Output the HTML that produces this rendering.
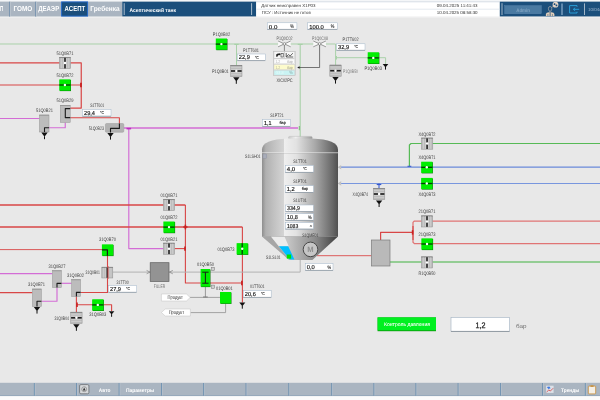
<!DOCTYPE html>
<html><head><meta charset="utf-8"><title>SCADA</title>
<style>html,body{margin:0;padding:0;background:#e8e8e8;}body{width:600px;height:400px;overflow:hidden;font-family:"Liberation Sans", sans-serif;}svg{display:block;will-change:transform;font-family:"Liberation Sans", sans-serif;}</style>
</head><body>
<svg width="600" height="400" viewBox="0 0 600 400" text-rendering="geometricPrecision">
<defs>
<linearGradient id="tg" x1="0" y1="0" x2="1" y2="0"><stop offset="0" stop-color="#8e8e8e"/><stop offset="0.05" stop-color="#b0b0b0"/><stop offset="0.16" stop-color="#c2c2c2"/><stop offset="0.285" stop-color="#d4d4d4"/><stop offset="0.29" stop-color="#efefef"/><stop offset="0.45" stop-color="#e2e2e2"/><stop offset="0.7" stop-color="#a8a8a8"/><stop offset="0.92" stop-color="#6a6a6a"/><stop offset="1" stop-color="#505050"/></linearGradient>
<linearGradient id="cg" x1="0" y1="0" x2="1" y2="0"><stop offset="0" stop-color="#d6d6d6"/><stop offset="0.35" stop-color="#c4c4c4"/><stop offset="0.7" stop-color="#8a8a8a"/><stop offset="1" stop-color="#3c3c3c"/></linearGradient>
<linearGradient id="ng" x1="0" y1="0" x2="1" y2="0"><stop offset="0" stop-color="#c8c8c8"/><stop offset="0.3" stop-color="#f0f0f0"/><stop offset="1" stop-color="#9a9a9a"/></linearGradient>
</defs>
<rect x="0" y="0" width="600" height="400" fill="#e8e8e8"/>
<path d="M0.00,44.00 L335.60,44.00" fill="none" stroke="#a9d1a9" stroke-width="1.00" stroke-linejoin="round" />
<path d="M236.50,44.00 L236.50,65.50" fill="none" stroke="#a9d1a9" stroke-width="1.00" stroke-linejoin="round" />
<line x1="234.30" y1="44.40" x2="238.70" y2="44.40" stroke="#a9d1a9" stroke-width="1.20"/>
<path d="M300.20,44.00 L300.20,137.00" fill="none" stroke="#a9d1a9" stroke-width="1.10" stroke-linejoin="round" />
<line x1="297.70" y1="44.40" x2="302.70" y2="44.40" stroke="#a9d1a9" stroke-width="1.20"/>
<path d="M335.60,44.00 L335.60,65.20" fill="none" stroke="#a9d1a9" stroke-width="1.00" stroke-linejoin="round" />
<path d="M335.60,57.70 L385.60,57.70 L385.60,64.00" fill="none" stroke="#a9d1a9" stroke-width="1.00" stroke-linejoin="round" />
<line x1="336.40" y1="56.00" x2="336.40" y2="59.40" stroke="#a9d1a9" stroke-width="1.20"/>
<path d="M0.00,62.90 L81.25,62.90 L81.25,108.10 L70.00,108.10" fill="none" stroke="#d84646" stroke-width="1.20" stroke-linejoin="round" />
<path d="M0.00,85.00 L81.25,85.00" fill="none" stroke="#d84646" stroke-width="1.20" stroke-linejoin="round" />
<line x1="81.00" y1="82.70" x2="81.00" y2="87.30" stroke="#c82020" stroke-width="1.80"/>
<path d="M70.00,117.75 L119.40,117.75 L119.40,124.00" fill="none" stroke="#d84646" stroke-width="1.10" stroke-linejoin="round" />
<path d="M0.00,118.45 L39.40,118.45" fill="none" stroke="#d36cd5" stroke-width="1.10" stroke-linejoin="round" />
<path d="M65.25,122.50 L65.25,127.75 L49.00,127.75" fill="none" stroke="#d36cd5" stroke-width="1.15" stroke-linejoin="round" />
<path d="M123.70,128.10 L298.00,128.10" fill="none" stroke="#d36cd5" stroke-width="1.50" stroke-linejoin="round" />
<path d="M128.80,128.10 L128.80,248.60 L163.40,248.60" fill="none" stroke="#d36cd5" stroke-width="1.15" stroke-linejoin="round" />
<line x1="126.50" y1="128.60" x2="131.10" y2="128.60" stroke="#c030c0" stroke-width="1.60"/>
<line x1="299.30" y1="126.00" x2="299.30" y2="130.20" stroke="#6fb86f" stroke-width="1.00"/>
<path d="M0.00,205.00 L185.40,205.00" fill="none" stroke="#d84646" stroke-width="1.40" stroke-linejoin="round" />
<path d="M185.40,205.00 L185.40,283.00 L242.40,283.00" fill="none" stroke="#d84646" stroke-width="1.10" stroke-linejoin="round" />
<path d="M0.00,227.00 L242.40,227.00" fill="none" stroke="#d84646" stroke-width="1.40" stroke-linejoin="round" />
<path d="M242.40,227.00 L242.40,302.60" fill="none" stroke="#d84646" stroke-width="1.10" stroke-linejoin="round" />
<line x1="185.40" y1="224.70" x2="185.40" y2="229.30" stroke="#c82020" stroke-width="1.60"/>
<line x1="183.30" y1="227.00" x2="187.50" y2="227.00" stroke="#c82020" stroke-width="1.40"/>
<path d="M174.60,248.60 L185.40,248.60" fill="none" stroke="#d84646" stroke-width="1.10" stroke-linejoin="round" />
<line x1="185.00" y1="246.40" x2="185.00" y2="250.80" stroke="#c82020" stroke-width="1.60"/>
<line x1="241.90" y1="280.80" x2="241.90" y2="285.20" stroke="#c82020" stroke-width="1.60"/>
<path d="M0.00,249.60 L102.50,249.60" fill="none" stroke="#d84646" stroke-width="0.90" stroke-linejoin="round" />
<path d="M107.50,255.00 L107.50,292.50 L80.60,292.50" fill="none" stroke="#d84646" stroke-width="1.10" stroke-linejoin="round" />
<path d="M0.00,292.60 L32.40,292.60" fill="none" stroke="#d84646" stroke-width="1.10" stroke-linejoin="round" />
<path d="M76.40,296.60 L76.40,312.00" fill="none" stroke="#d84646" stroke-width="1.10" stroke-linejoin="round" />
<path d="M76.40,304.70 L111.60,304.70 L111.60,311.00" fill="none" stroke="#d84646" stroke-width="1.10" stroke-linejoin="round" />
<line x1="77.00" y1="302.50" x2="77.00" y2="306.90" stroke="#c82020" stroke-width="1.60"/>
<path d="M0.00,273.60 L52.40,273.60" fill="none" stroke="#d36cd5" stroke-width="1.15" stroke-linejoin="round" />
<path d="M61.40,283.30 L71.60,283.30" fill="none" stroke="#d36cd5" stroke-width="1.15" stroke-linejoin="round" />
<path d="M57.00,287.60 L57.00,301.20 L41.40,301.20" fill="none" stroke="#d36cd5" stroke-width="1.15" stroke-linejoin="round" />
<path d="M113.00,272.10 L300.20,272.10 L300.20,259.80" fill="none" stroke="#b2b2b2" stroke-width="1.00" stroke-linejoin="round" />
<path d="M146.6,270.4 L150,272.1 L146.6,273.8" fill="none" stroke="#8a8a8a" stroke-width="0.8"/>
<path d="M172.8,270.4 L169.4,272.1 L172.8,273.8" fill="none" stroke="#8a8a8a" stroke-width="0.8"/>
<path d="M205.40,286.60 L205.40,297.40" fill="none" stroke="#8e8e8e" stroke-width="0.90" stroke-linejoin="round" />
<path d="M190.00,297.40 L220.00,297.40" fill="none" stroke="#9a9a9a" stroke-width="0.90" stroke-linejoin="round" />
<line x1="203.10" y1="297.00" x2="207.70" y2="297.00" stroke="#7a7a7a" stroke-width="1.00"/>
<path d="M225.60,303.60 L225.60,312.60 L190.40,312.60" fill="none" stroke="#9a9a9a" stroke-width="0.90" stroke-linejoin="round" />
<path d="M340.00,167.20 L600.00,167.20" fill="none" stroke="#6a8ada" stroke-width="1.30" stroke-linejoin="round" />
<path d="M340.00,183.40 L600.00,183.40" fill="none" stroke="#7896de" stroke-width="1.05" stroke-linejoin="round" />
<path d="M341.2,165.4 L338.2,167.2 L341.2,169" fill="#c4c4c4" stroke="#a4a4a4" stroke-width="0.4"/>
<path d="M341.2,181.6 L338.2,183.4 L341.2,185.2" fill="#c4c4c4" stroke="#a4a4a4" stroke-width="0.4"/>
<path d="M409.40,166.40 L409.40,145.00 L411.00,143.50 L600.00,143.50" fill="none" stroke="#56ba56" stroke-width="1.20" stroke-linejoin="round" />
<line x1="407.50" y1="166.30" x2="411.30" y2="166.30" stroke="#3858cc" stroke-width="1.10"/>
<path d="M379.00,183.40 L379.00,188.40" fill="none" stroke="#4a6ad2" stroke-width="1.20" stroke-linejoin="round" />
<line x1="376.70" y1="184.50" x2="381.30" y2="184.50" stroke="#3858cc" stroke-width="1.20"/>
<path d="M317.00,255.70 L371.40,255.70" fill="none" stroke="#dc5a5a" stroke-width="1.00" stroke-linejoin="round" />
<path d="M380.60,240.00 L380.60,232.40 L413.00,232.40" fill="none" stroke="#d84646" stroke-width="1.20" stroke-linejoin="round" />
<path d="M600.00,221.00 L414.40,221.00 L413.00,222.40 L413.00,242.20 L414.40,243.60 L600.00,243.60" fill="none" stroke="#e07474" stroke-width="1.25" stroke-linejoin="round" />
<path d="M413.00,226.00 L413.00,240.00" fill="none" stroke="#d84646" stroke-width="1.10" stroke-linejoin="round" />
<line x1="412.60" y1="230.20" x2="412.60" y2="234.60" stroke="#c82020" stroke-width="1.60"/>
<path d="M390.00,262.00 L600.00,262.00" fill="none" stroke="#78c478" stroke-width="1.30" stroke-linejoin="round" />
<rect x="288.6" y="136.4" width="23.6" height="3" rx="1" fill="url(#ng)" stroke="#b4b4b4" stroke-width="0.4"/>
<path d="M262,236.7 L262,149.5 C262,142.6 271,139.1 288,138.4 L312,138.4 C329,139.1 338,142.6 338,149.5 L338,236.7 Z" fill="url(#tg)"/>
<line x1="262" y1="152.7" x2="338" y2="152.7" stroke="#f2f2f2" stroke-width="0.7" opacity="0.85"/>
<line x1="262" y1="153.4" x2="338" y2="153.4" stroke="#909090" stroke-width="0.4" opacity="0.6"/>
<path d="M262,236.5 L338,236.5 L312.4,259.9 L289.2,259.9 Z" fill="url(#cg)"/>
<path d="M262,236.5 L271,236.5 L289.4,259.9 L289.2,259.9 Z" fill="#a6a6a6"/>
<path d="M271,236.5 L284.5,236.5 L288.7,246.2 L278.9,246.2 Z" fill="#ececec"/>
<path d="M278.9,246.2 L288.2,246.2 L294.4,259.4 L289.6,259.4 Z" fill="#00bfff"/>
<line x1="262" y1="236.6" x2="338" y2="236.6" stroke="#8c8c8c" stroke-width="0.5" opacity="0.7"/>
<rect x="286.8" y="254.5" width="4.3" height="4.1" fill="#00e400"/>
<circle cx="310.5" cy="249.4" r="7.3" fill="#c6c6c6" stroke="#3c3c3c" stroke-width="0.9"/>
<text x="310.5" y="252.1" font-size="7.6" font-weight="bold" fill="#8e8e8e" text-anchor="middle">M</text>
<rect x="263" y="154" width="3.8" height="4.2" fill="#a8acb8" stroke="#8c90a0" stroke-width="0.4"/>
<rect x="285.30" y="165.40" width="28.20" height="7.00" fill="#fff" stroke="#a4b8cb" stroke-width="0.5"/>
<line x1="285.30" y1="172.40" x2="313.50" y2="172.40" stroke="#808890" stroke-width="0.6"/>
<text x="286.80" y="171.09" font-size="5.80" fill="#111" font-weight="normal" textLength="8.40" lengthAdjust="spacingAndGlyphs" stroke="#111" stroke-width="0.14">4,0</text>
<text x="302.90" y="170.31" font-size="4.20" fill="#222" font-weight="normal" textLength="4.00" lengthAdjust="spacingAndGlyphs" stroke="#222" stroke-width="0.12">°C</text>
<rect x="285.30" y="185.60" width="28.20" height="6.90" fill="#fff" stroke="#a4b8cb" stroke-width="0.5"/>
<line x1="285.30" y1="192.50" x2="313.50" y2="192.50" stroke="#808890" stroke-width="0.6"/>
<text x="286.80" y="191.24" font-size="5.80" fill="#111" font-weight="normal" textLength="8.00" lengthAdjust="spacingAndGlyphs" stroke="#111" stroke-width="0.14">1,2</text>
<text x="301.80" y="190.46" font-size="4.20" fill="#222" font-weight="normal" textLength="6.40" lengthAdjust="spacingAndGlyphs" stroke="#222" stroke-width="0.12">бар</text>
<rect x="285.50" y="205.00" width="27.90" height="6.60" fill="#fff" stroke="#a4b8cb" stroke-width="0.5"/>
<line x1="285.50" y1="211.60" x2="313.40" y2="211.60" stroke="#808890" stroke-width="0.6"/>
<text x="287.00" y="210.49" font-size="5.80" fill="#111" font-weight="normal" textLength="13.00" lengthAdjust="spacingAndGlyphs" stroke="#111" stroke-width="0.14">334,9</text>
<rect x="285.50" y="213.70" width="27.90" height="6.70" fill="#fff" stroke="#a4b8cb" stroke-width="0.5"/>
<line x1="285.50" y1="220.40" x2="313.40" y2="220.40" stroke="#808890" stroke-width="0.6"/>
<text x="287.00" y="219.24" font-size="5.80" fill="#111" font-weight="normal" textLength="10.80" lengthAdjust="spacingAndGlyphs" stroke="#111" stroke-width="0.14">10,8</text>
<text x="307.90" y="218.75" font-size="5.00" fill="#222" font-weight="normal" textLength="3.60" lengthAdjust="spacingAndGlyphs" stroke="#222" stroke-width="0.12">%</text>
<rect x="285.50" y="222.50" width="27.90" height="6.60" fill="#fff" stroke="#a4b8cb" stroke-width="0.5"/>
<line x1="285.50" y1="229.10" x2="313.40" y2="229.10" stroke="#808890" stroke-width="0.6"/>
<text x="287.00" y="227.99" font-size="5.80" fill="#111" font-weight="normal" textLength="11.20" lengthAdjust="spacingAndGlyphs" stroke="#111" stroke-width="0.14">1083</text>
<text x="309.70" y="226.92" font-size="3.40" fill="#222" font-weight="normal" textLength="1.80" lengthAdjust="spacingAndGlyphs" stroke="#222" stroke-width="0.12">л</text>
<rect x="305.30" y="263.60" width="27.70" height="6.80" fill="#fff" stroke="#a4b8cb" stroke-width="0.5"/>
<line x1="305.30" y1="270.40" x2="333.00" y2="270.40" stroke="#808890" stroke-width="0.6"/>
<text x="306.80" y="269.19" font-size="5.80" fill="#111" font-weight="normal" textLength="8.00" lengthAdjust="spacingAndGlyphs" stroke="#111" stroke-width="0.14">0,0</text>
<text x="327.50" y="268.70" font-size="5.00" fill="#222" font-weight="normal" textLength="3.60" lengthAdjust="spacingAndGlyphs" stroke="#222" stroke-width="0.12">%</text>
<rect x="262.40" y="119.60" width="28.00" height="6.80" fill="#fff" stroke="#a4b8cb" stroke-width="0.5"/>
<line x1="262.40" y1="126.40" x2="290.40" y2="126.40" stroke="#808890" stroke-width="0.6"/>
<text x="263.90" y="125.19" font-size="5.80" fill="#111" font-weight="normal" textLength="7.60" lengthAdjust="spacingAndGlyphs" stroke="#111" stroke-width="0.14">1,1</text>
<text x="279.40" y="124.41" font-size="4.20" fill="#222" font-weight="normal" textLength="6.40" lengthAdjust="spacingAndGlyphs" stroke="#222" stroke-width="0.12">бар</text>
<text x="270.25" y="117.40" font-size="5.00" fill="#404040" font-weight="normal" textLength="13.50" lengthAdjust="spacingAndGlyphs">S1PT21</text>
<text x="293.25" y="163.40" font-size="5.00" fill="#404040" font-weight="normal" textLength="13.50" lengthAdjust="spacingAndGlyphs">S1TT01</text>
<text x="293.25" y="183.40" font-size="5.00" fill="#404040" font-weight="normal" textLength="13.50" lengthAdjust="spacingAndGlyphs">S1PT01</text>
<text x="293.25" y="202.40" font-size="5.00" fill="#404040" font-weight="normal" textLength="13.50" lengthAdjust="spacingAndGlyphs">S1UT01</text>
<text x="245.00" y="158.20" font-size="5.00" fill="#404040" font-weight="normal" textLength="15.60" lengthAdjust="spacingAndGlyphs">S1LSH01</text>
<text x="266.00" y="258.60" font-size="5.00" fill="#404040" font-weight="normal" textLength="14.60" lengthAdjust="spacingAndGlyphs">S1LSL01</text>
<text x="302.20" y="237.10" font-size="5.00" fill="#404040" font-weight="normal" textLength="16.20" lengthAdjust="spacingAndGlyphs">S1QME01</text>
<g>
<rect x="216.30" y="39.00" width="11.20" height="11.20" fill="#0a7a0a"/>
<rect x="215.80" y="38.50" width="11.20" height="11.20" fill="#00ee00"/>
<rect x="215.80" y="43.45" width="11.20" height="1.3" fill="#063a06"/>
<circle cx="221.40" cy="44.10" r="1.2" fill="#fff"/>
</g>
<text x="212.75" y="35.90" font-size="5.00" fill="#404040" font-weight="normal" textLength="17.50" lengthAdjust="spacingAndGlyphs">P1Q0B02</text>
<rect x="237.30" y="54.00" width="28.00" height="6.60" fill="#fff" stroke="#a4b8cb" stroke-width="0.5"/>
<line x1="237.30" y1="60.60" x2="265.30" y2="60.60" stroke="#808890" stroke-width="0.6"/>
<text x="238.80" y="59.49" font-size="5.80" fill="#111" font-weight="normal" textLength="11.00" lengthAdjust="spacingAndGlyphs" stroke="#111" stroke-width="0.14">22,9</text>
<text x="254.90" y="58.71" font-size="4.20" fill="#222" font-weight="normal" textLength="4.00" lengthAdjust="spacingAndGlyphs" stroke="#222" stroke-width="0.12">°C</text>
<text x="243.00" y="51.80" font-size="5.00" fill="#404040" font-weight="normal" textLength="16.00" lengthAdjust="spacingAndGlyphs">P1TT601</text>
<g>
<rect x="230.60" y="65.40" width="11.40" height="11.20" fill="#bbbbbb" stroke="#939393" stroke-width="0.5"/>
<line x1="230.60" y1="65.60" x2="242.00" y2="65.60" stroke="#767676" stroke-width="0.7"/>
<rect x="231.20" y="66.80" width="10.20" height="1.1" fill="#cdcdcd"/>
<rect x="231.20" y="68.90" width="10.20" height="1.1" fill="#cdcdcd"/>
<rect x="231.20" y="72.00" width="10.20" height="1.1" fill="#cdcdcd"/>
<rect x="231.20" y="74.10" width="10.20" height="1.1" fill="#cdcdcd"/>
<rect x="231.00" y="70.20" width="10.60" height="1.6" fill="#1e1e1e"/>
<circle cx="236.30" cy="71.00" r="1.25" fill="#fff"/>
</g>
<path d="M233.10,77.20 L239.50,77.20 L236.30,81.40 Z" fill="#111"/>
<line x1="236.30" y1="80.90" x2="236.30" y2="83.80" stroke="#111" stroke-width="1"/>
<text x="211.90" y="73.10" font-size="5.00" fill="#404040" font-weight="normal" textLength="16.90" lengthAdjust="spacingAndGlyphs">P1Q0B01</text>
<rect x="267.30" y="22.80" width="29.60" height="6.60" fill="#fff" stroke="#a4b8cb" stroke-width="0.5"/>
<line x1="267.30" y1="29.40" x2="296.90" y2="29.40" stroke="#808890" stroke-width="0.6"/>
<clipPath id="c1"><rect x="267.30" y="22.80" width="29.60" height="6.20"/></clipPath><g clip-path="url(#c1)">
<text x="268.80" y="29.39" font-size="5.80" fill="#111" font-weight="normal" textLength="8.60" lengthAdjust="spacingAndGlyphs" stroke="#111" stroke-width="0.14">0,0</text>
<text x="290.30" y="27.94" font-size="5.40" fill="#222" font-weight="normal" textLength="3.60" lengthAdjust="spacingAndGlyphs" stroke="#222" stroke-width="0.12">%</text>
</g>
<rect x="307.70" y="22.80" width="29.60" height="6.60" fill="#fff" stroke="#a4b8cb" stroke-width="0.5"/>
<line x1="307.70" y1="29.40" x2="337.30" y2="29.40" stroke="#808890" stroke-width="0.6"/>
<clipPath id="c2"><rect x="307.70" y="22.80" width="29.60" height="6.20"/></clipPath><g clip-path="url(#c2)">
<text x="309.20" y="29.39" font-size="5.80" fill="#111" font-weight="normal" textLength="14.60" lengthAdjust="spacingAndGlyphs" stroke="#111" stroke-width="0.14">100,0</text>
<text x="330.70" y="27.94" font-size="5.40" fill="#222" font-weight="normal" textLength="3.60" lengthAdjust="spacingAndGlyphs" stroke="#222" stroke-width="0.12">%</text>
</g>
<path d="M278.10,41.00 L290.70,46.80 L290.70,41.00 L278.10,46.80 Z" fill="#fafafa"/>
<path d="M278.10,41.00 L290.70,46.80 M290.70,41.00 L278.10,46.80" fill="none" stroke="#5a5a5a" stroke-width="0.6"/>
<circle cx="284.40" cy="43.90" r="1.3" fill="#fafafa" stroke="#555" stroke-width="0.5"/>
<path d="M313.30,41.00 L325.90,46.80 L325.90,41.00 L313.30,46.80 Z" fill="#fafafa"/>
<path d="M313.30,41.00 L325.90,46.80 M325.90,41.00 L313.30,46.80" fill="none" stroke="#5a5a5a" stroke-width="0.6"/>
<circle cx="319.60" cy="43.90" r="1.3" fill="#fafafa" stroke="#555" stroke-width="0.5"/>
<text x="276.50" y="39.70" font-size="5.00" fill="#5c5c5c" font-weight="normal" textLength="16.00" lengthAdjust="spacingAndGlyphs">P1Q0C02</text>
<text x="312.00" y="39.70" font-size="5.00" fill="#6c6c6c" font-weight="normal" textLength="16.00" lengthAdjust="spacingAndGlyphs">P1Q0C08</text>
<path d="M284.40,45.20 L284.40,51.30" fill="none" stroke="#444" stroke-width="0.60" stroke-linejoin="round" />
<path d="M319.60,45.20 L319.60,67.50 L298.00,67.50" fill="none" stroke="#333" stroke-width="0.65" stroke-linejoin="round" />
<path d="M299.6,66.2 L297.2,67.5 L299.6,68.8 Z" fill="#222"/>
<rect x="273.4" y="51.2" width="21.8" height="24.3" fill="#dedede" stroke="#b8b8b8" stroke-width="0.5"/>
<rect x="274" y="51.8" width="10.1" height="6.4" fill="#f6f6f6" stroke="#bcbcbc" stroke-width="0.35"/>
<rect x="284.6" y="51.8" width="10.1" height="6.4" fill="#f6f6f6" stroke="#bcbcbc" stroke-width="0.35"/>
<path d="M276.2,56.8 L276.2,54.6 Q277.4,53 279.2,53.6 L279.2,52.9 L280.8,54.3 L279.2,55.6 L279.2,54.9 Q277.8,54.7 277.4,56.8 Z" fill="#222"/>
<rect x="281" y="53.4" width="2.2" height="3.6" fill="none" stroke="#333" stroke-width="0.6"/>
<path d="M286.2,53 L286.2,57 L293.2,57 M286.6,56.4 L288.6,54.6 L290.2,56 L292.8,53.2" fill="none" stroke="#222" stroke-width="0.7"/>
<rect x="274" y="59.0" width="20.7" height="4.8" fill="#fcfcfc" stroke="#c4c4c4" stroke-width="0.3"/>
<rect x="274" y="64.7" width="20.7" height="4.8" fill="#fdfbcc" stroke="#c8c8c8" stroke-width="0.3"/>
<rect x="274" y="70.3" width="20.7" height="4.8" fill="#c9f3f3" stroke="#c8c8c8" stroke-width="0.3"/>
<text x="275.40" y="63.08" font-size="4.40" fill="#b4b4b4" font-weight="normal" textLength="4.80" lengthAdjust="spacingAndGlyphs">1,2</text>
<text x="287.00" y="62.94" font-size="4.00" fill="#a8a8a8" font-weight="normal" textLength="5.80" lengthAdjust="spacingAndGlyphs">бар</text>
<text x="275.40" y="68.78" font-size="4.40" fill="#b0b09c" font-weight="normal" textLength="4.80" lengthAdjust="spacingAndGlyphs">1,2</text>
<text x="287.00" y="68.64" font-size="4.00" fill="#a0a08c" font-weight="normal" textLength="5.80" lengthAdjust="spacingAndGlyphs">бар</text>
<text x="275.00" y="74.28" font-size="4.40" fill="#e6fafa" font-weight="normal" textLength="8.60" lengthAdjust="spacingAndGlyphs">-53,8</text>
<text x="289.20" y="74.36" font-size="4.60" fill="#8aa8a8" font-weight="normal" textLength="3.40" lengthAdjust="spacingAndGlyphs">%</text>
<text x="276.50" y="81.80" font-size="5.00" fill="#3a3a3a" font-weight="normal" textLength="16.00" lengthAdjust="spacingAndGlyphs">XIC02PC</text>
<rect x="336.60" y="43.80" width="28.40" height="6.50" fill="#fff" stroke="#a4b8cb" stroke-width="0.5"/>
<line x1="336.60" y1="50.30" x2="365.00" y2="50.30" stroke="#808890" stroke-width="0.6"/>
<text x="338.10" y="49.24" font-size="5.80" fill="#111" font-weight="normal" textLength="11.00" lengthAdjust="spacingAndGlyphs" stroke="#111" stroke-width="0.14">32,9</text>
<text x="354.20" y="48.46" font-size="4.20" fill="#222" font-weight="normal" textLength="4.00" lengthAdjust="spacingAndGlyphs" stroke="#222" stroke-width="0.12">°C</text>
<text x="342.60" y="41.20" font-size="5.00" fill="#404040" font-weight="normal" textLength="16.00" lengthAdjust="spacingAndGlyphs">P1TT602</text>
<g>
<rect x="329.80" y="65.10" width="11.40" height="11.20" fill="#bbbbbb" stroke="#939393" stroke-width="0.5"/>
<line x1="329.80" y1="65.30" x2="341.20" y2="65.30" stroke="#767676" stroke-width="0.7"/>
<rect x="330.40" y="66.50" width="10.20" height="1.1" fill="#cdcdcd"/>
<rect x="330.40" y="68.60" width="10.20" height="1.1" fill="#cdcdcd"/>
<rect x="330.40" y="71.70" width="10.20" height="1.1" fill="#cdcdcd"/>
<rect x="330.40" y="73.80" width="10.20" height="1.1" fill="#cdcdcd"/>
<rect x="330.20" y="69.90" width="10.60" height="1.6" fill="#1e1e1e"/>
<circle cx="335.50" cy="70.70" r="1.25" fill="#fff"/>
</g>
<path d="M332.30,77.00 L338.70,77.00 L335.50,81.20 Z" fill="#111"/>
<line x1="335.50" y1="80.70" x2="335.50" y2="83.60" stroke="#111" stroke-width="1"/>
<text x="343.00" y="73.30" font-size="5.00" fill="#7c7c7c" font-weight="normal" textLength="15.00" lengthAdjust="spacingAndGlyphs">P1Q0B50</text>
<g>
<rect x="368.20" y="52.80" width="11.20" height="11.20" fill="#0a7a0a"/>
<rect x="367.70" y="52.30" width="11.20" height="11.20" fill="#00ee00"/>
<rect x="367.70" y="57.25" width="11.20" height="1.3" fill="#063a06"/>
<circle cx="373.30" cy="57.90" r="1.2" fill="#fff"/>
</g>
<text x="364.40" y="69.70" font-size="5.00" fill="#404040" font-weight="normal" textLength="17.50" lengthAdjust="spacingAndGlyphs">P1Q0B03</text>
<path d="M382.70,64.00 L388.30,64.00 L385.50,67.40 Z" fill="#111"/>
<line x1="385.50" y1="66.90" x2="385.50" y2="69.60" stroke="#111" stroke-width="1"/>
<g>
<rect x="59.30" y="57.40" width="11.40" height="11.20" fill="#bbbbbb" stroke="#939393" stroke-width="0.5"/>
<line x1="59.30" y1="57.60" x2="70.70" y2="57.60" stroke="#767676" stroke-width="0.7"/>
<rect x="60.80" y="58.10" width="1.1" height="10.00" fill="#cdcdcd"/>
<rect x="62.90" y="58.10" width="1.1" height="10.00" fill="#cdcdcd"/>
<rect x="66.00" y="58.10" width="1.1" height="10.00" fill="#cdcdcd"/>
<rect x="68.10" y="58.10" width="1.1" height="10.00" fill="#cdcdcd"/>
<rect x="64.25" y="57.80" width="1.5" height="10.60" fill="#1e1e1e"/>
<circle cx="65.00" cy="63.00" r="1.25" fill="#fff"/>
</g>
<text x="56.50" y="55.00" font-size="5.00" fill="#404040" font-weight="normal" textLength="17.00" lengthAdjust="spacingAndGlyphs">51Q0B71</text>
<g>
<rect x="59.80" y="79.90" width="11.20" height="11.20" fill="#0a7a0a"/>
<rect x="59.30" y="79.40" width="11.20" height="11.20" fill="#00ee00"/>
<rect x="59.30" y="84.35" width="11.20" height="1.3" fill="#063a06"/>
<circle cx="64.90" cy="85.00" r="1.2" fill="#fff"/>
</g>
<text x="56.50" y="77.40" font-size="5.00" fill="#404040" font-weight="normal" textLength="17.00" lengthAdjust="spacingAndGlyphs">51Q0B72</text>
<text x="56.50" y="102.00" font-size="5.00" fill="#404040" font-weight="normal" textLength="17.00" lengthAdjust="spacingAndGlyphs">51Q0B29</text>
<rect x="60.30" y="105.30" width="9.90" height="17.20" fill="#bcbcbc" stroke="#959595" stroke-width="0.5"/>
<line x1="60.30" y1="105.50" x2="70.20" y2="105.50" stroke="#8a8a8a" stroke-width="0.6"/>
<path d="M70.20,108.60 L65.30,108.60 L65.30,117.60 L70.20,117.60" fill="none" stroke="#1a1a1a" stroke-width="1.10" stroke-linejoin="round" stroke-linecap="butt"/>
<text x="36.00" y="111.80" font-size="5.00" fill="#404040" font-weight="normal" textLength="17.00" lengthAdjust="spacingAndGlyphs">51Q0B21</text>
<rect x="39.40" y="115.00" width="9.60" height="17.00" fill="#bcbcbc" stroke="#959595" stroke-width="0.5"/>
<line x1="39.40" y1="115.20" x2="49.00" y2="115.20" stroke="#8a8a8a" stroke-width="0.6"/>
<path d="M49.00,127.75 L44.50,127.75 L44.50,132.00" fill="none" stroke="#1a1a1a" stroke-width="1.10" stroke-linejoin="round" stroke-linecap="butt"/>
<path d="M41.30,132.60 L47.70,132.60 L44.50,136.80 Z" fill="#111"/>
<line x1="44.50" y1="136.30" x2="44.50" y2="139.20" stroke="#111" stroke-width="1"/>
<rect x="82.50" y="109.50" width="28.50" height="6.70" fill="#fff" stroke="#a4b8cb" stroke-width="0.5"/>
<line x1="82.50" y1="116.20" x2="111.00" y2="116.20" stroke="#808890" stroke-width="0.6"/>
<text x="84.00" y="115.04" font-size="5.80" fill="#111" font-weight="normal" textLength="11.00" lengthAdjust="spacingAndGlyphs" stroke="#111" stroke-width="0.14">29,4</text>
<text x="100.10" y="114.26" font-size="4.20" fill="#222" font-weight="normal" textLength="4.00" lengthAdjust="spacingAndGlyphs" stroke="#222" stroke-width="0.12">°C</text>
<text x="90.20" y="107.40" font-size="5.00" fill="#404040" font-weight="normal" textLength="14.00" lengthAdjust="spacingAndGlyphs">S1TT601</text>
<rect x="105.4" y="123.5" width="18.4" height="8.8" rx="1.2" fill="#b2b2b2" stroke="#9a9a9a" stroke-width="0.5"/>
<path d="M119.40,123.60 L119.40,128.40 L110.50,128.40 L110.50,132.60" fill="none" stroke="#1a1a1a" stroke-width="1.10" stroke-linejoin="round" stroke-linecap="butt"/>
<path d="M107.30,133.00 L113.70,133.00 L110.50,137.20 Z" fill="#111"/>
<line x1="110.50" y1="136.70" x2="110.50" y2="139.60" stroke="#111" stroke-width="1"/>
<text x="88.80" y="129.90" font-size="5.00" fill="#404040" font-weight="normal" textLength="15.20" lengthAdjust="spacingAndGlyphs">51Q0B23</text>
<g>
<rect x="163.30" y="199.40" width="11.40" height="11.20" fill="#bbbbbb" stroke="#939393" stroke-width="0.5"/>
<line x1="163.30" y1="199.60" x2="174.70" y2="199.60" stroke="#767676" stroke-width="0.7"/>
<rect x="164.80" y="200.10" width="1.1" height="10.00" fill="#cdcdcd"/>
<rect x="166.90" y="200.10" width="1.1" height="10.00" fill="#cdcdcd"/>
<rect x="170.00" y="200.10" width="1.1" height="10.00" fill="#cdcdcd"/>
<rect x="172.10" y="200.10" width="1.1" height="10.00" fill="#cdcdcd"/>
<rect x="168.25" y="199.80" width="1.5" height="10.60" fill="#1e1e1e"/>
<circle cx="169.00" cy="205.00" r="1.25" fill="#fff"/>
</g>
<text x="160.50" y="197.20" font-size="5.00" fill="#404040" font-weight="normal" textLength="17.00" lengthAdjust="spacingAndGlyphs">01Q0B71</text>
<g>
<rect x="163.90" y="222.00" width="11.20" height="11.20" fill="#0a7a0a"/>
<rect x="163.40" y="221.50" width="11.20" height="11.20" fill="#00ee00"/>
<rect x="163.40" y="226.45" width="11.20" height="1.3" fill="#063a06"/>
<circle cx="169.00" cy="227.10" r="1.2" fill="#fff"/>
</g>
<text x="160.50" y="219.20" font-size="5.00" fill="#404040" font-weight="normal" textLength="17.00" lengthAdjust="spacingAndGlyphs">01Q0B72</text>
<g>
<rect x="163.30" y="243.10" width="11.40" height="11.20" fill="#bbbbbb" stroke="#939393" stroke-width="0.5"/>
<line x1="163.30" y1="243.30" x2="174.70" y2="243.30" stroke="#767676" stroke-width="0.7"/>
<rect x="164.80" y="243.80" width="1.1" height="10.00" fill="#cdcdcd"/>
<rect x="166.90" y="243.80" width="1.1" height="10.00" fill="#cdcdcd"/>
<rect x="170.00" y="243.80" width="1.1" height="10.00" fill="#cdcdcd"/>
<rect x="172.10" y="243.80" width="1.1" height="10.00" fill="#cdcdcd"/>
<rect x="168.25" y="243.50" width="1.5" height="10.60" fill="#1e1e1e"/>
<circle cx="169.00" cy="248.70" r="1.25" fill="#fff"/>
</g>
<text x="160.50" y="240.80" font-size="5.00" fill="#404040" font-weight="normal" textLength="17.00" lengthAdjust="spacingAndGlyphs">01Q0B21</text>
<g>
<rect x="237.10" y="243.70" width="11.20" height="11.20" fill="#0a7a0a"/>
<rect x="236.60" y="243.20" width="11.20" height="11.20" fill="#00ee00"/>
<rect x="241.55" y="243.20" width="1.3" height="11.20" fill="#063a06"/>
<circle cx="242.20" cy="248.80" r="1.2" fill="#fff"/>
</g>
<text x="217.40" y="251.20" font-size="5.00" fill="#404040" font-weight="normal" textLength="17.00" lengthAdjust="spacingAndGlyphs">01Q0B73</text>
<text x="250.00" y="288.40" font-size="5.00" fill="#404040" font-weight="normal" textLength="14.60" lengthAdjust="spacingAndGlyphs">01TT601</text>
<rect x="243.30" y="290.60" width="27.90" height="6.80" fill="#fff" stroke="#a4b8cb" stroke-width="0.5"/>
<line x1="243.30" y1="297.40" x2="271.20" y2="297.40" stroke="#808890" stroke-width="0.6"/>
<text x="244.80" y="296.19" font-size="5.80" fill="#111" font-weight="normal" textLength="11.00" lengthAdjust="spacingAndGlyphs" stroke="#111" stroke-width="0.14">20,6</text>
<text x="260.90" y="295.41" font-size="4.20" fill="#222" font-weight="normal" textLength="4.00" lengthAdjust="spacingAndGlyphs" stroke="#222" stroke-width="0.12">°C</text>
<path d="M239.30,302.50 L245.30,302.50 L242.30,306.30 Z" fill="#111"/>
<line x1="242.30" y1="305.80" x2="242.30" y2="308.70" stroke="#111" stroke-width="1"/>
<g>
<rect x="102.40" y="244.90" width="11.20" height="11.20" fill="#0a7a0a"/>
<rect x="101.90" y="244.40" width="11.20" height="11.20" fill="#00ee00"/>
</g>
<path d="M102.00,249.80 L107.40,249.80 L107.40,255.70" fill="none" stroke="#1a1a1a" stroke-width="1.20" stroke-linejoin="round" stroke-linecap="butt"/>
<text x="99.00" y="240.80" font-size="5.00" fill="#404040" font-weight="normal" textLength="17.00" lengthAdjust="spacingAndGlyphs">31Q0B70</text>
<g>
<rect x="101.80" y="267.20" width="11.00" height="10.80" fill="#bbbbbb" stroke="#939393" stroke-width="0.5"/>
<line x1="101.80" y1="267.40" x2="112.80" y2="267.40" stroke="#767676" stroke-width="0.7"/>
<rect x="103.10" y="267.90" width="1.1" height="9.60" fill="#cdcdcd"/>
<rect x="105.20" y="267.90" width="1.1" height="9.60" fill="#cdcdcd"/>
<rect x="108.30" y="267.90" width="1.1" height="9.60" fill="#cdcdcd"/>
<rect x="110.40" y="267.90" width="1.1" height="9.60" fill="#cdcdcd"/>
<rect x="106.55" y="267.60" width="1.5" height="10.20" fill="#1e1e1e"/>
</g>
<path d="M108.00,266.00 L108.00,279.00" fill="none" stroke="#d84646" stroke-width="0.90" stroke-linejoin="round" />
<text x="85.60" y="274.40" font-size="5.00" fill="#404040" font-weight="normal" textLength="14.40" lengthAdjust="spacingAndGlyphs">31Q0B01</text>
<rect x="108.50" y="285.60" width="28.10" height="6.70" fill="#fff" stroke="#a4b8cb" stroke-width="0.5"/>
<line x1="108.50" y1="292.30" x2="136.60" y2="292.30" stroke="#808890" stroke-width="0.6"/>
<text x="110.00" y="291.14" font-size="5.80" fill="#111" font-weight="normal" textLength="11.00" lengthAdjust="spacingAndGlyphs" stroke="#111" stroke-width="0.14">27,9</text>
<text x="126.10" y="290.36" font-size="4.20" fill="#222" font-weight="normal" textLength="4.00" lengthAdjust="spacingAndGlyphs" stroke="#222" stroke-width="0.12">°C</text>
<text x="116.60" y="283.70" font-size="5.00" fill="#404040" font-weight="normal" textLength="12.20" lengthAdjust="spacingAndGlyphs">31TT00</text>
<rect x="52.40" y="270.60" width="9.00" height="17.00" fill="#bcbcbc" stroke="#959595" stroke-width="0.5"/>
<line x1="52.40" y1="270.80" x2="61.40" y2="270.80" stroke="#8a8a8a" stroke-width="0.6"/>
<path d="M61.40,283.40 L57.00,283.40 L57.00,287.60" fill="none" stroke="#1a1a1a" stroke-width="1.10" stroke-linejoin="round" stroke-linecap="butt"/>
<text x="48.50" y="268.20" font-size="5.00" fill="#404040" font-weight="normal" textLength="17.00" lengthAdjust="spacingAndGlyphs">31Q0B27</text>
<rect x="71.60" y="279.60" width="9.00" height="16.90" fill="#bcbcbc" stroke="#959595" stroke-width="0.5"/>
<line x1="71.60" y1="279.80" x2="80.60" y2="279.80" stroke="#8a8a8a" stroke-width="0.6"/>
<path d="M80.60,292.40 L76.40,292.40 L76.40,296.50" fill="none" stroke="#1a1a1a" stroke-width="1.10" stroke-linejoin="round" stroke-linecap="butt"/>
<text x="67.10" y="276.80" font-size="5.00" fill="#404040" font-weight="normal" textLength="17.00" lengthAdjust="spacingAndGlyphs">31Q0B02</text>
<rect x="32.40" y="289.00" width="9.00" height="17.50" fill="#bcbcbc" stroke="#959595" stroke-width="0.5"/>
<line x1="32.40" y1="289.20" x2="41.40" y2="289.20" stroke="#8a8a8a" stroke-width="0.6"/>
<path d="M41.40,301.30 L37.00,301.30 L37.00,306.50" fill="none" stroke="#1a1a1a" stroke-width="1.10" stroke-linejoin="round" stroke-linecap="butt"/>
<path d="M33.80,307.00 L40.20,307.00 L37.00,311.20 Z" fill="#111"/>
<line x1="37.00" y1="310.70" x2="37.00" y2="313.60" stroke="#111" stroke-width="1"/>
<text x="28.10" y="286.20" font-size="5.00" fill="#404040" font-weight="normal" textLength="17.00" lengthAdjust="spacingAndGlyphs">31Q0B71</text>
<g>
<rect x="92.70" y="299.80" width="11.20" height="11.20" fill="#0a7a0a"/>
<rect x="92.20" y="299.30" width="11.20" height="11.20" fill="#00ee00"/>
<rect x="92.20" y="304.25" width="11.20" height="1.3" fill="#063a06"/>
<circle cx="97.80" cy="304.90" r="1.2" fill="#fff"/>
</g>
<text x="89.30" y="316.20" font-size="5.00" fill="#404040" font-weight="normal" textLength="17.00" lengthAdjust="spacingAndGlyphs">31Q0B03</text>
<path d="M108.80,311.20 L114.40,311.20 L111.60,314.60 Z" fill="#111"/>
<line x1="111.60" y1="314.10" x2="111.60" y2="316.80" stroke="#111" stroke-width="1"/>
<g>
<rect x="70.70" y="312.20" width="11.40" height="11.20" fill="#bbbbbb" stroke="#939393" stroke-width="0.5"/>
<line x1="70.70" y1="312.40" x2="82.10" y2="312.40" stroke="#767676" stroke-width="0.7"/>
<rect x="71.30" y="313.60" width="10.20" height="1.1" fill="#cdcdcd"/>
<rect x="71.30" y="315.70" width="10.20" height="1.1" fill="#cdcdcd"/>
<rect x="71.30" y="318.80" width="10.20" height="1.1" fill="#cdcdcd"/>
<rect x="71.30" y="320.90" width="10.20" height="1.1" fill="#cdcdcd"/>
<rect x="71.10" y="317.00" width="10.60" height="1.6" fill="#1e1e1e"/>
<circle cx="76.40" cy="317.80" r="1.25" fill="#fff"/>
</g>
<path d="M73.20,324.20 L79.60,324.20 L76.40,328.40 Z" fill="#111"/>
<line x1="76.40" y1="327.90" x2="76.40" y2="330.80" stroke="#111" stroke-width="1"/>
<text x="54.40" y="320.20" font-size="5.00" fill="#404040" font-weight="normal" textLength="14.60" lengthAdjust="spacingAndGlyphs">31Q0B04</text>
<rect x="150.2" y="262.7" width="18.8" height="18.8" fill="#939393" stroke="#5e5e5e" stroke-width="0.7"/>
<text x="153.65" y="288.20" font-size="5.00" fill="#666" font-weight="normal" textLength="11.50" lengthAdjust="spacingAndGlyphs">FILLER</text>
<rect x="201.1" y="269.5" width="9.4" height="17.6" fill="#0a7a0a"/>
<rect x="200.6" y="269" width="9.4" height="17.6" fill="#00ee00"/>
<path d="M202.20,272.20 L208.60,272.20" fill="none" stroke="#1a1a1a" stroke-width="1.00" stroke-linejoin="round" stroke-linecap="butt"/>
<path d="M202.20,283.20 L208.60,283.20" fill="none" stroke="#1a1a1a" stroke-width="1.00" stroke-linejoin="round" stroke-linecap="butt"/>
<path d="M205.40,272.20 L205.40,283.20" fill="none" stroke="#1a1a1a" stroke-width="1.00" stroke-linejoin="round" stroke-linecap="butt"/>
<text x="197.00" y="266.20" font-size="5.00" fill="#404040" font-weight="normal" textLength="17.00" lengthAdjust="spacingAndGlyphs">01Q0B50</text>
<rect x="211.6" y="267.4" width="3" height="3.2" fill="#cfcfcf" stroke="#777" stroke-width="0.5"/>
<rect x="211.6" y="285.1" width="3" height="3.2" fill="#cfcfcf" stroke="#777" stroke-width="0.5"/>
<path d="M161.4,294 L186.4,294 L190.2,297.5 L186.4,301 L161.4,301 Z" fill="#fff" stroke="#c2c2c2" stroke-width="0.5"/>
<text x="167.50" y="299.37" font-size="5.20" fill="#2a2a2a" font-weight="normal" textLength="15.50" lengthAdjust="spacingAndGlyphs">Продукт</text>
<path d="M190.4,309 L165.2,309 L161.4,312.5 L165.2,316 L190.4,316 Z" fill="#fff" stroke="#c2c2c2" stroke-width="0.5"/>
<text x="168.70" y="314.37" font-size="5.20" fill="#2a2a2a" font-weight="normal" textLength="15.30" lengthAdjust="spacingAndGlyphs">Продукт</text>
<rect x="220.5" y="292.5" width="11" height="11.4" fill="#0a7a0a"/>
<rect x="220" y="292" width="11" height="11.4" fill="#00ee00"/>
<text x="216.00" y="290.00" font-size="5.00" fill="#404040" font-weight="normal" textLength="16.80" lengthAdjust="spacingAndGlyphs">01Q0B01</text>
<g>
<rect x="421.40" y="138.00" width="11.40" height="11.20" fill="#bbbbbb" stroke="#939393" stroke-width="0.5"/>
<line x1="421.40" y1="138.20" x2="432.80" y2="138.20" stroke="#767676" stroke-width="0.7"/>
<rect x="422.90" y="138.70" width="1.1" height="10.00" fill="#cdcdcd"/>
<rect x="425.00" y="138.70" width="1.1" height="10.00" fill="#cdcdcd"/>
<rect x="428.10" y="138.70" width="1.1" height="10.00" fill="#cdcdcd"/>
<rect x="430.20" y="138.70" width="1.1" height="10.00" fill="#cdcdcd"/>
<rect x="426.35" y="138.40" width="1.5" height="10.60" fill="#1e1e1e"/>
<circle cx="427.10" cy="143.60" r="1.25" fill="#fff"/>
</g>
<text x="418.50" y="135.80" font-size="5.00" fill="#404040" font-weight="normal" textLength="17.00" lengthAdjust="spacingAndGlyphs">X4Q0B72</text>
<g>
<rect x="421.70" y="162.20" width="11.20" height="11.20" fill="#0a7a0a"/>
<rect x="421.20" y="161.70" width="11.20" height="11.20" fill="#00ee00"/>
<rect x="421.20" y="166.65" width="11.20" height="1.3" fill="#063a06"/>
<circle cx="426.80" cy="167.30" r="1.2" fill="#fff"/>
</g>
<text x="418.50" y="159.40" font-size="5.00" fill="#404040" font-weight="normal" textLength="17.00" lengthAdjust="spacingAndGlyphs">X4Q0B71</text>
<g>
<rect x="421.70" y="178.40" width="11.20" height="11.20" fill="#0a7a0a"/>
<rect x="421.20" y="177.90" width="11.20" height="11.20" fill="#00ee00"/>
<rect x="421.20" y="182.85" width="11.20" height="1.3" fill="#063a06"/>
<circle cx="426.80" cy="183.50" r="1.2" fill="#fff"/>
</g>
<text x="418.50" y="195.80" font-size="5.00" fill="#404040" font-weight="normal" textLength="17.00" lengthAdjust="spacingAndGlyphs">X4Q0B73</text>
<g>
<rect x="373.40" y="188.40" width="11.40" height="11.20" fill="#bbbbbb" stroke="#939393" stroke-width="0.5"/>
<line x1="373.40" y1="188.60" x2="384.80" y2="188.60" stroke="#767676" stroke-width="0.7"/>
<rect x="374.00" y="189.80" width="10.20" height="1.1" fill="#cdcdcd"/>
<rect x="374.00" y="191.90" width="10.20" height="1.1" fill="#cdcdcd"/>
<rect x="374.00" y="195.00" width="10.20" height="1.1" fill="#cdcdcd"/>
<rect x="374.00" y="197.10" width="10.20" height="1.1" fill="#cdcdcd"/>
<rect x="373.80" y="193.20" width="10.60" height="1.6" fill="#1e1e1e"/>
<circle cx="379.10" cy="194.00" r="1.25" fill="#fff"/>
</g>
<path d="M375.90,200.40 L382.30,200.40 L379.10,204.60 Z" fill="#111"/>
<line x1="379.10" y1="204.10" x2="379.10" y2="207.00" stroke="#111" stroke-width="1"/>
<text x="352.60" y="195.80" font-size="5.00" fill="#404040" font-weight="normal" textLength="15.40" lengthAdjust="spacingAndGlyphs">X4Q0B74</text>
<g>
<rect x="421.30" y="215.80" width="11.40" height="11.20" fill="#bbbbbb" stroke="#939393" stroke-width="0.5"/>
<line x1="421.30" y1="216.00" x2="432.70" y2="216.00" stroke="#767676" stroke-width="0.7"/>
<rect x="422.80" y="216.50" width="1.1" height="10.00" fill="#cdcdcd"/>
<rect x="424.90" y="216.50" width="1.1" height="10.00" fill="#cdcdcd"/>
<rect x="428.00" y="216.50" width="1.1" height="10.00" fill="#cdcdcd"/>
<rect x="430.10" y="216.50" width="1.1" height="10.00" fill="#cdcdcd"/>
<rect x="426.25" y="216.20" width="1.5" height="10.60" fill="#1e1e1e"/>
<circle cx="427.00" cy="221.40" r="1.25" fill="#fff"/>
</g>
<text x="418.50" y="213.20" font-size="5.00" fill="#404040" font-weight="normal" textLength="17.00" lengthAdjust="spacingAndGlyphs">21Q0B71</text>
<g>
<rect x="421.90" y="238.90" width="11.20" height="11.20" fill="#0a7a0a"/>
<rect x="421.40" y="238.40" width="11.20" height="11.20" fill="#00ee00"/>
<rect x="421.40" y="243.35" width="11.20" height="1.3" fill="#063a06"/>
<circle cx="427.00" cy="244.00" r="1.2" fill="#fff"/>
</g>
<text x="418.50" y="235.80" font-size="5.00" fill="#404040" font-weight="normal" textLength="17.00" lengthAdjust="spacingAndGlyphs">21Q0B73</text>
<g>
<rect x="421.30" y="256.80" width="11.40" height="11.20" fill="#bbbbbb" stroke="#939393" stroke-width="0.5"/>
<line x1="421.30" y1="257.00" x2="432.70" y2="257.00" stroke="#767676" stroke-width="0.7"/>
<rect x="422.80" y="257.50" width="1.1" height="10.00" fill="#cdcdcd"/>
<rect x="424.90" y="257.50" width="1.1" height="10.00" fill="#cdcdcd"/>
<rect x="428.00" y="257.50" width="1.1" height="10.00" fill="#cdcdcd"/>
<rect x="430.10" y="257.50" width="1.1" height="10.00" fill="#cdcdcd"/>
<rect x="426.25" y="257.20" width="1.5" height="10.60" fill="#1e1e1e"/>
<circle cx="427.00" cy="262.40" r="1.25" fill="#fff"/>
</g>
<text x="418.50" y="274.80" font-size="5.00" fill="#404040" font-weight="normal" textLength="17.00" lengthAdjust="spacingAndGlyphs">R1Q0B50</text>
<rect x="371.4" y="240" width="18.6" height="26" fill="#b9b9b9" stroke="#7c7c7c" stroke-width="0.7"/>
<rect x="377.6" y="317.4" width="58.4" height="13.8" fill="#0a900a"/>
<rect x="377.6" y="317.4" width="58.4" height="13.0" fill="#00f020"/>
<text x="384.00" y="326.20" font-size="5.00" fill="#fff" font-weight="normal" textLength="46.00" lengthAdjust="spacingAndGlyphs" stroke="#fff" stroke-width="0.05">Контроль давления</text>
<rect x="451" y="317.4" width="58.6" height="14" fill="#fff" stroke="#9fb0c0" stroke-width="0.6"/>
<line x1="451" y1="331.4" x2="509.6" y2="331.4" stroke="#7a828a" stroke-width="0.7"/>
<text x="475.60" y="327.88" font-size="8.00" fill="#222" font-weight="normal" textLength="10.00" lengthAdjust="spacingAndGlyphs" stroke="#222" stroke-width="0.25">1,2</text>
<text x="516.00" y="328.09" font-size="5.80" fill="#707070" font-weight="normal" textLength="10.40" lengthAdjust="spacingAndGlyphs">бар</text>
<rect x="0" y="0" width="600" height="1.6" fill="#f4f6f8"/>
<rect x="0" y="1.65" width="122.5" height="15" fill="#aab5c1"/>
<rect x="122.3" y="1.65" width="133.9" height="15" fill="#1b4f7c"/>
<rect x="256.2" y="1.65" width="243.6" height="15" fill="#ffffff"/>
<rect x="499.8" y="1.65" width="100.2" height="15" fill="#1b4f7c"/>
<rect x="0" y="16.65" width="600" height="0.9" fill="#f2f3f4"/>
<line x1="9.50" y1="1.7" x2="9.50" y2="16.6" stroke="#6485a6" stroke-width="0.8"/>
<line x1="10.30" y1="1.5" x2="10.30" y2="16.5" stroke="#c6ced6" stroke-width="0.6"/>
<line x1="35.60" y1="1.7" x2="35.60" y2="16.6" stroke="#6485a6" stroke-width="0.8"/>
<line x1="36.40" y1="1.5" x2="36.40" y2="16.5" stroke="#c6ced6" stroke-width="0.6"/>
<rect x="61.6" y="1.9" width="26" height="14.2" fill="#1b4f7c" stroke="#2268cc" stroke-width="0.9"/>
<text x="0.00" y="11.49" font-size="7.20" fill="#fff" font-weight="bold" textLength="3.20" lengthAdjust="spacingAndGlyphs">П</text>
<text x="13.40" y="11.49" font-size="7.20" fill="#fff" font-weight="bold" textLength="18.80" lengthAdjust="spacingAndGlyphs">ГОМО</text>
<text x="38.20" y="11.49" font-size="7.20" fill="#fff" font-weight="bold" textLength="21.00" lengthAdjust="spacingAndGlyphs">ДЕАЭР</text>
<text x="64.60" y="11.49" font-size="7.20" fill="#fff" font-weight="bold" textLength="20.60" lengthAdjust="spacingAndGlyphs">АСЕПТ</text>
<text x="90.20" y="11.49" font-size="7.20" fill="#fff" font-weight="bold" textLength="29.40" lengthAdjust="spacingAndGlyphs">Гребенка</text>
<line x1="124.2" y1="3.2" x2="124.2" y2="15" stroke="#d0dae4" stroke-width="0.8"/>
<line x1="251.6" y1="3.2" x2="251.6" y2="15" stroke="#d0dae4" stroke-width="0.8"/>
<text x="129.60" y="11.81" font-size="5.30" fill="#fff" font-weight="bold" textLength="46.40" lengthAdjust="spacingAndGlyphs">Асептический танк</text>
<line x1="256.2" y1="9.2" x2="499.8" y2="9.2" stroke="#d2dce6" stroke-width="0.6"/>
<line x1="256.2" y1="1.85" x2="499.8" y2="1.85" stroke="#a9bccd" stroke-width="0.4"/>
<text x="261.20" y="7.18" font-size="4.40" fill="#333" font-weight="normal" textLength="54.40" lengthAdjust="spacingAndGlyphs">Датчик неисправен X1P03</text>
<text x="261.80" y="14.18" font-size="4.40" fill="#333" font-weight="normal" textLength="49.00" lengthAdjust="spacingAndGlyphs">ПСУ : Источник не готов</text>
<text x="436.80" y="7.18" font-size="4.40" fill="#333" font-weight="normal" textLength="40.80" lengthAdjust="spacingAndGlyphs">09.04.2025 11:41:43</text>
<text x="436.80" y="14.18" font-size="4.40" fill="#333" font-weight="normal" textLength="40.80" lengthAdjust="spacingAndGlyphs">10.04.2025 08:58:30</text>
<line x1="502" y1="3.2" x2="502" y2="15" stroke="#c4d0dc" stroke-width="0.8"/>
<rect x="504.6" y="5.6" width="36.8" height="8.2" fill="#4a7aa2" stroke="#5c88ae" stroke-width="0.4"/>
<text x="516.20" y="11.60" font-size="5.00" fill="#7fa3c2" font-weight="bold" textLength="13.80" lengthAdjust="spacingAndGlyphs">Admin</text>
<circle cx="555.5" cy="4.7" r="2.9" fill="#e4d4c6"/>
<rect x="553.7" y="3.2" width="1.7" height="1.7" rx="0.5" fill="#1b4f7c"/>
<rect x="555.6" y="4.6" width="1.7" height="1.7" rx="0.5" fill="#1b4f7c"/>
<ellipse cx="550.1" cy="8.8" rx="1.7" ry="2.4" fill="none" stroke="#a9a6a6" stroke-width="0.7"/>
<line x1="551.7" y1="7.3" x2="553.3" y2="6.5" stroke="#c8bcb0" stroke-width="0.6"/>
<path d="M545.9,16.1 L545.9,14.1 Q546.2,12.4 549,12.3 L551.4,12.3 Q554.2,12.4 554.4,14.1 L554.4,16.1 Z" fill="#e4cfba"/>
<line x1="550.15" y1="12.2" x2="550.15" y2="16.2" stroke="#1b4f7c" stroke-width="0.8"/>
<line x1="547.9" y1="14" x2="547.9" y2="16.2" stroke="#1b4f7c" stroke-width="0.5"/>
<line x1="552.4" y1="14" x2="552.4" y2="16.2" stroke="#1b4f7c" stroke-width="0.5"/>
<line x1="549.5" y1="11" x2="549.5" y2="12.4" stroke="#a9a6a6" stroke-width="0.5"/>
<line x1="550.8" y1="11" x2="550.8" y2="12.4" stroke="#a9a6a6" stroke-width="0.5"/>
<line x1="562" y1="3.4" x2="562" y2="14.9" stroke="#86a8c8" stroke-width="1.3"/>
<path d="M577,6.9 L577,5.6 L569.6,5.6 L569.6,13 L577,13 L577,11.7" fill="none" stroke="#2aa6e2" stroke-width="0.9"/>
<path d="M579.2,9.3 L573.4,9.3 M575.2,7.7 L573.4,9.3 L575.2,10.9" fill="none" stroke="#2aa6e2" stroke-width="0.9"/>
<line x1="584.5" y1="3.4" x2="584.5" y2="15" stroke="#c4d0dc" stroke-width="0.8"/>
<text x="588.00" y="10.98" font-size="4.40" fill="#9fb8d0" font-weight="normal" textLength="15.00" lengthAdjust="spacingAndGlyphs">10/04/2</text>
<rect x="0" y="382.8" width="600" height="13.2" fill="#aab5c1"/>
<rect x="0" y="395.3" width="600" height="0.9" fill="#8fa4b8"/>
<rect x="0" y="396.2" width="600" height="3.8" fill="#fbfbfb"/>
<line x1="34.40" y1="383" x2="34.40" y2="395.6" stroke="#5481a8" stroke-width="0.8"/>
<line x1="35.10" y1="383" x2="35.10" y2="395.6" stroke="#c2ccd6" stroke-width="0.5"/>
<line x1="76.50" y1="383" x2="76.50" y2="395.6" stroke="#5481a8" stroke-width="0.8"/>
<line x1="77.20" y1="383" x2="77.20" y2="395.6" stroke="#c2ccd6" stroke-width="0.5"/>
<line x1="119.20" y1="383" x2="119.20" y2="395.6" stroke="#5481a8" stroke-width="0.8"/>
<line x1="119.90" y1="383" x2="119.90" y2="395.6" stroke="#c2ccd6" stroke-width="0.5"/>
<line x1="161.50" y1="383" x2="161.50" y2="395.6" stroke="#5481a8" stroke-width="0.8"/>
<line x1="162.20" y1="383" x2="162.20" y2="395.6" stroke="#c2ccd6" stroke-width="0.5"/>
<line x1="203.70" y1="383" x2="203.70" y2="395.6" stroke="#5481a8" stroke-width="0.8"/>
<line x1="204.40" y1="383" x2="204.40" y2="395.6" stroke="#c2ccd6" stroke-width="0.5"/>
<line x1="246.10" y1="383" x2="246.10" y2="395.6" stroke="#5481a8" stroke-width="0.8"/>
<line x1="246.80" y1="383" x2="246.80" y2="395.6" stroke="#c2ccd6" stroke-width="0.5"/>
<line x1="288.90" y1="383" x2="288.90" y2="395.6" stroke="#5481a8" stroke-width="0.8"/>
<line x1="289.60" y1="383" x2="289.60" y2="395.6" stroke="#c2ccd6" stroke-width="0.5"/>
<line x1="331.80" y1="383" x2="331.80" y2="395.6" stroke="#5481a8" stroke-width="0.8"/>
<line x1="332.50" y1="383" x2="332.50" y2="395.6" stroke="#c2ccd6" stroke-width="0.5"/>
<line x1="374.00" y1="383" x2="374.00" y2="395.6" stroke="#5481a8" stroke-width="0.8"/>
<line x1="374.70" y1="383" x2="374.70" y2="395.6" stroke="#c2ccd6" stroke-width="0.5"/>
<line x1="416.00" y1="383" x2="416.00" y2="395.6" stroke="#5481a8" stroke-width="0.8"/>
<line x1="416.70" y1="383" x2="416.70" y2="395.6" stroke="#c2ccd6" stroke-width="0.5"/>
<line x1="458.20" y1="383" x2="458.20" y2="395.6" stroke="#5481a8" stroke-width="0.8"/>
<line x1="458.90" y1="383" x2="458.90" y2="395.6" stroke="#c2ccd6" stroke-width="0.5"/>
<line x1="500.50" y1="383" x2="500.50" y2="395.6" stroke="#5481a8" stroke-width="0.8"/>
<line x1="501.20" y1="383" x2="501.20" y2="395.6" stroke="#c2ccd6" stroke-width="0.5"/>
<line x1="542.50" y1="383" x2="542.50" y2="395.6" stroke="#5481a8" stroke-width="0.8"/>
<line x1="543.20" y1="383" x2="543.20" y2="395.6" stroke="#c2ccd6" stroke-width="0.5"/>
<line x1="585.40" y1="383" x2="585.40" y2="395.6" stroke="#5481a8" stroke-width="0.8"/>
<line x1="586.10" y1="383" x2="586.10" y2="395.6" stroke="#c2ccd6" stroke-width="0.5"/>
<rect x="79.6" y="384.6" width="9.3" height="9.2" rx="1.3" fill="#d6d8da" stroke="#5c6064" stroke-width="0.7"/>
<circle cx="84.2" cy="389.2" r="2.5" fill="none" stroke="#777" stroke-width="0.6"/>
<path d="M84.2,387.6 L85.6,390.4 L82.8,390.4 Z" fill="#333"/>
<text x="98.80" y="391.77" font-size="5.20" fill="#fff" font-weight="bold" textLength="11.60" lengthAdjust="spacingAndGlyphs">Авто</text>
<text x="126.00" y="391.77" font-size="5.20" fill="#fff" font-weight="bold" textLength="28.20" lengthAdjust="spacingAndGlyphs">Параметры</text>
<rect x="546.1" y="385.7" width="7.5" height="7.2" fill="#dde1e8"/>
<path d="M546.6,392 L548.8,390 L550.4,391 L553.2,388.2" fill="none" stroke="#d24040" stroke-width="0.8"/>
<path d="M546.8,387 L549.4,386.6 L550.6,388.2 L548.4,389 Z" fill="#3c78e0"/>
<text x="561.00" y="391.77" font-size="5.20" fill="#fff" font-weight="bold" textLength="18.40" lengthAdjust="spacingAndGlyphs">Тренды</text>
<rect x="588.3" y="386.1" width="7.4" height="7.8" rx="0.8" fill="#f4efe6" stroke="#c89448" stroke-width="0.9"/>
<rect x="590.5" y="385.2" width="3" height="1.8" fill="#c89448"/>
</svg></body></html>
